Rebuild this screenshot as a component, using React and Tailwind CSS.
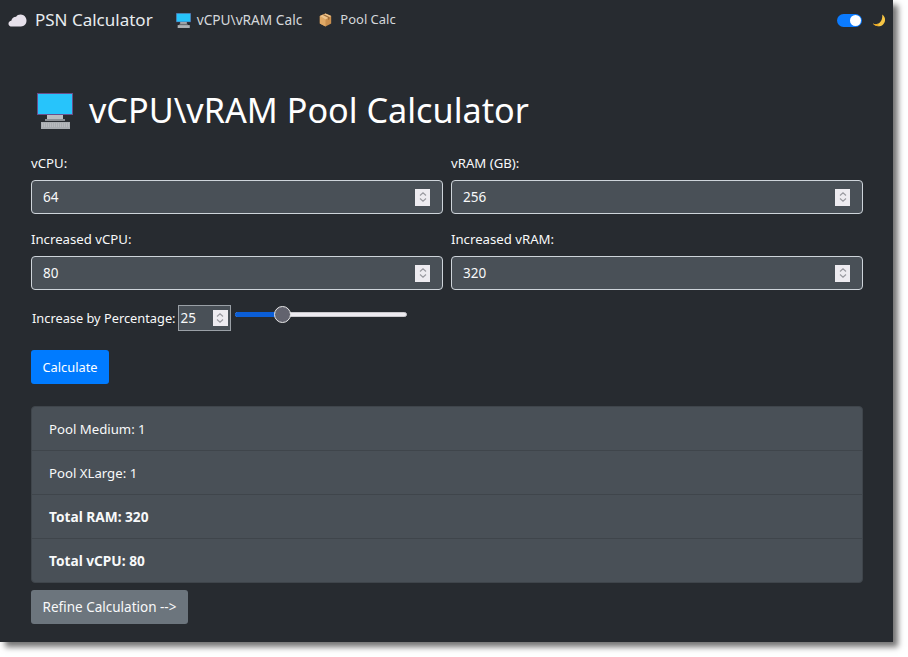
import React from 'react';

const font = { fontFamily: '"Noto Sans", sans-serif' };

const Cloud = ({ className }) => (
  <svg viewBox="0 0 20 14" className={className}>
    <path d="M4 13.500C1.800 13.500.3 12.200.3 10.400c0-1.700 1.300-3 3-3.200C4 4.600 6 3 8.500 3c1-1.500 2.600-2.400 5-2.400 3.400 0 6.200 3 6.200 6.500 0 3.700-2.500 6.400-6 6.400z" fill="#e6e0ea" />
  </svg>
);

const Desktop = ({ className }) => (
  <svg viewBox="0 0 36 36" className={className}>
    <rect x="0.500" y="0.500" width="35" height="21" fill="#27c4fb" stroke="#6a4f8c" />
    <rect x="10" y="22" width="16" height="4" fill="#b9bcc0" />
    <rect x="8" y="26" width="20" height="2" fill="#8b8f94" />
    <rect x="4" y="29" width="29" height="7" fill="#a9adb1" />
    <path d="M5 31h27M5 33h27" stroke="#d2d4d6" strokeWidth="0.700" strokeDasharray="1 1" />
  </svg>
);

const Box = ({ className }) => (
  <svg viewBox="0 0 14 16" className={className}>
    <path d="M7 0.500 13.500 3.500V12L7 15.500.5 12V3.500z" fill="#c98f4e" />
    <path d="M7 7.500V15.500L.5 12V3.500z" fill="#e0a965" />
    <path d="M7 0.500 13.500 3.500 7 7.500.5 3.500z" fill="#eec48b" />
    <path d="M3.500 2 10 5.500V8l1.500-.8V4.700L5 1.300z" fill="#9b6a38" />
  </svg>
);

const Moon = ({ className }) => (
  <svg viewBox="0 0 14 14" className={className}>
    <path d="M10.500.5C12.800 2 13.800 4.500 13.500 7c-.4 3.600-3.400 6.300-7 6.300-2.400 0-4.600-1.100-6-3 1.600.8 3.600.9 5.300.2 3.200-1.300 5.100-4.700 4.700-10z" fill="#f6c544" />
    <path d="M.5 10.300c1.600.8 3.600.9 5.300.2.600.8.700 1.800.7 2.800-2.400 0-4.600-1.100-6-3z" fill="#e9a825" />
  </svg>
);

const Spinner = ({ className }) => (
  <div className={`flex flex-col items-center justify-center gap-[2px] bg-[#edebf0] ${className}`}>
    <svg viewBox="0 0 8 4" className="h-[4px] w-[8px]"><path d="M1 3.500 4 .8l3 2.700" fill="none" stroke="#9a9aa0" strokeWidth="1.200" /></svg>
    <svg viewBox="0 0 8 4" className="h-[4px] w-[8px]"><path d="M1 .5 4 3.200 7 .5" fill="none" stroke="#9a9aa0" strokeWidth="1.200" /></svg>
  </div>
);

const Field = ({ label, value }) => (
  <div>
    <label className="block text-[13.200px] leading-[20px] text-[#f8f9fa]">{label}</label>
    <div className="mt-[7px] flex h-[34px] items-center justify-between rounded-[4px] border border-[#ced4da] bg-[#495057] pl-[11px] pr-[12px]">
      <span className="text-[13.500px] text-[#f8f9fa]">{value}</span>
      <Spinner className="h-[17px] w-[15px]" />
    </div>
  </div>
);

const rows = [
  { text: 'Pool Medium: 1', cls: 'h-[43px] text-[13.200px]' },
  { text: 'Pool XLarge: 1', cls: 'h-[44px] border-t border-[#3f454b] text-[13.200px]' },
  { text: 'Total RAM: 320', cls: 'h-[44px] border-t border-[#3f454b] text-[13.700px] font-bold' },
  { text: 'Total vCPU: 80', cls: 'h-[44px] border-t border-[#3f454b] text-[13.700px] font-bold' },
];

export default function App() {
  return (
    <div className="h-[657px] w-[908px] bg-white" style={font}>
      <div className="h-[642px] w-[893px] bg-[#272b30] shadow-[5px_5px_6px_rgba(0,0,0,0.55)]">
        <nav className="flex h-[40px] items-center pl-[8px] pr-[7px]">
          <Cloud className="h-[13px] w-[19px]" />
          <span className="ml-[8px] text-[17px] text-[#e9ecef]">PSN Calculator</span>
          <Desktop className="ml-[23px] h-[15px] w-[15px]" />
          <span className="ml-[6px] text-[13.700px] text-[#d5d8db]">vCPU\vRAM Calc</span>
          <Box className="ml-[17px] h-[14px] w-[13px]" />
          <span className="ml-[8px] text-[13px] text-[#d5d8db]">Pool Calc</span>
          <div className="ml-auto flex items-center gap-[10px]">
            <div className="flex h-[13px] w-[25px] items-center justify-end rounded-full bg-[#0b7bff] pr-[1px]">
              <div className="h-[11px] w-[11px] rounded-full bg-white" />
            </div>
            <Moon className="h-[13px] w-[14px]" />
          </div>
        </nav>

        <main className="pl-[31px] pr-[30px]">
          <div className="mt-[49px] flex h-[44px] items-center">
            <Desktop className="ml-[6px] h-[36px] w-[36px]" />
            <h1 className="-mt-[2px] ml-[16px] text-[34.200px] font-normal text-white">vCPU\vRAM Pool Calculator</h1>
          </div>

          <div className="mt-[20px] grid grid-cols-2 gap-x-[8px] gap-y-[15px]">
            <Field label="vCPU:" value="64" />
            <Field label="vRAM (GB):" value="256" />
            <Field label="Increased vCPU:" value="80" />
            <Field label="Increased vRAM:" value="320" />
          </div>

          <div className="mt-[15px] flex h-[26px] items-center">
            <span className="ml-[1px] pt-[2px] text-[12.800px] text-[#f8f9fa]">Increase by Percentage:</span>
            <div className="ml-[2px] flex h-[26px] w-[53px] items-center justify-between border border-[#9aa0a6] bg-[#495057] pl-[2px] pr-[2px]">
              <span className="text-[13.500px] text-[#f8f9fa]">25</span>
              <Spinner className="h-[16px] w-[15px]" />
            </div>
            <div className="relative mb-[8px] ml-[4px] flex h-[5px] w-[172px] rounded-full border border-[#c9c8cc] bg-[#edebf0]">
              <div className="-m-[1px] h-[5px] w-[40px] rounded-l-full bg-[#0b5ed7]" />
              <div className="absolute left-[38px] top-[-7px] h-[17px] w-[17px] rounded-full border border-[#e8e8e8] bg-[#62636e]" />
            </div>
          </div>

          <button className="mt-[19px] block h-[34px] w-[78px] rounded-[3px] bg-[#007bff] pt-[2px] text-[12.800px] text-white">Calculate</button>

          <ul className="mt-[22px] rounded-[4px] border border-[#3f454b] bg-[#495057]">
            {rows.map((row) => (
              <li key={row.text} className={`flex items-center pl-[17px] pt-[2px] text-[#f8f9fa] ${row.cls}`}>
                {row.text}
              </li>
            ))}
          </ul>

          <button className="mt-[7px] block h-[34px] w-[157px] rounded-[3px] bg-[#6c757d] text-[13.500px] text-[#f8f9fa]">Refine Calculation --&gt;</button>
        </main>
      </div>
    </div>
  );
}
